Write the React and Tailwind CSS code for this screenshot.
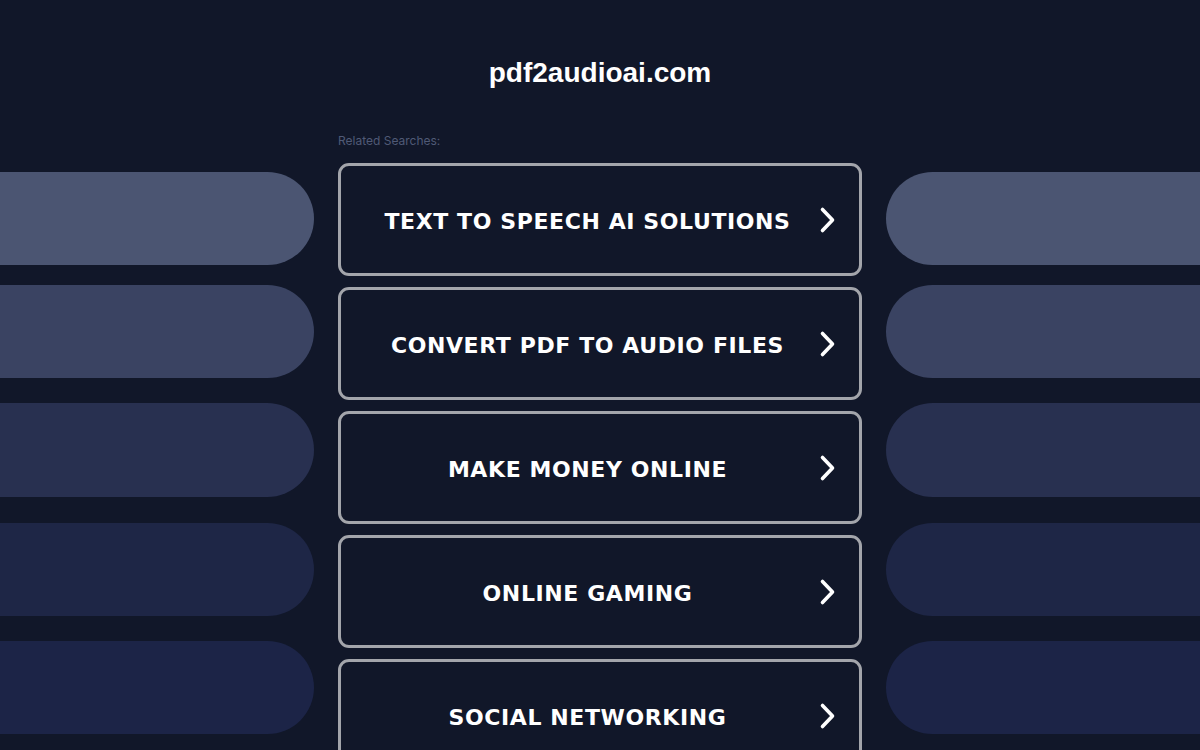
import React from "react";

const items = [
  "TEXT TO SPEECH AI SOLUTIONS",
  "CONVERT PDF TO AUDIO FILES",
  "MAKE MONEY ONLINE",
  "ONLINE GAMING",
  "SOCIAL NETWORKING",
];

function Pills({ side }) {
  const round = side === "left" ? "rounded-r-[47px]" : "rounded-l-[47px]";
  return (
    <div className="flex w-[314px] shrink-0 flex-col pt-[172px]">
      <div className={`h-[93px] ${round} bg-[#4b5572]`} />
      <div className={`mt-[20px] h-[93px] ${round} bg-[#3a4362]`} />
      <div className={`mt-[25px] h-[94px] ${round} bg-[#283050]`} />
      <div className={`mt-[26px] h-[93px] ${round} bg-[#1e2646]`} />
      <div className={`mt-[25px] h-[93px] ${round} bg-[#1c2447]`} />
    </div>
  );
}

function Chevron() {
  return (
    <svg width="18" height="28" viewBox="0 0 18 28" fill="none" className="shrink-0">
      <path d="M3.5 3.5 L13.5 14 L3.5 24.5" stroke="white" strokeWidth="3.6" strokeLinecap="round" strokeLinejoin="round" />
    </svg>
  );
}

export default function App() {
  return (
    <div className="h-[750px] w-[1200px] overflow-hidden bg-[#111729]">
      <div className="flex h-[124px] items-start justify-center pt-[56px]">
        <h1 className="text-[28px] font-bold leading-[34px] text-white" style={{ fontFamily: '"Liberation Sans", Arial, sans-serif' }}>
          pdf2audioai.com
        </h1>
      </div>
      <div className="flex -mt-[124px]">
        <Pills side="left" />
        <div className="mx-[24px] flex w-[524px] shrink-0 flex-col pt-[133px]" style={{ fontFamily: '"DejaVu Sans", Verdana, sans-serif' }}>
          <div className="h-[16px] text-[12px] leading-[16px] text-[#505a76]" style={{ fontFamily: 'Inter, "Noto Sans", sans-serif' }}>
            Related Searches:
          </div>
          <div className="mt-[14px] flex flex-col gap-[11px]">
            {items.map((t) => (
              <div
                key={t}
                className="flex h-[113px] items-center justify-between rounded-[11px] border-[3px] border-[#a3a5ab] bg-[#111729] pl-[15px] pr-[22px]"
              >
                <span className="flex-1 pt-[3px] text-center text-[22px] font-bold tracking-[0.6px] text-white">{t}</span>
                <Chevron />
              </div>
            ))}
          </div>
        </div>
        <Pills side="right" />
      </div>
    </div>
  );
}
